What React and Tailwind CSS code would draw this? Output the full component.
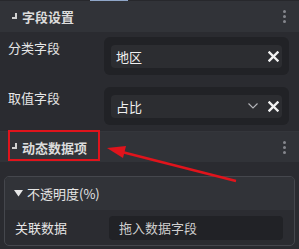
import React from "react";

const font = { fontFamily: '"Noto Sans CJK SC", "Noto Sans", sans-serif' };

function Kebab() {
  return (
    <div className="flex flex-col gap-[2px] items-center">
      <span className="w-[3px] h-[3px] rounded-full bg-[#85878d]" />
      <span className="w-[3px] h-[3px] rounded-full bg-[#85878d]" />
      <span className="w-[3px] h-[3px] rounded-full bg-[#85878d]" />
    </div>
  );
}

function XIcon() {
  return (
    <svg width="11" height="11" viewBox="0 0 11 11">
      <path d="M1.5 1.5 L9.5 9.5 M9.5 1.5 L1.5 9.5" stroke="#f2f2f2" strokeWidth="2.4" strokeLinecap="square" />
    </svg>
  );
}

function Chevron() {
  return (
    <svg width="10" height="6" viewBox="0 0 10 6">
      <path d="M0.5 0.5 L5 5 L9.5 0.5" stroke="#b5b6ba" strokeWidth="1.1" fill="none" />
    </svg>
  );
}

function Corner() {
  return <span className="inline-block w-[5px] h-[6px] border-r-2 border-b-2 border-[#d0d0d0] mr-[5px] mb-[2px]" />;
}

function SectionHeader({ title, h }) {
  return (
    <div className={`${h} bg-[#313338] flex items-center pl-[12px] pr-[13px]`}>
      <Corner />
      <span className="text-[13px] font-bold text-[#dcdcdc] leading-none">{title}</span>
      <div className="ml-auto">
        <Kebab />
      </div>
    </div>
  );
}

function Field({ label, value, select }) {
  return (
    <div className="flex items-start">
      <div className="w-[104px] pl-[8px] pt-[2px] text-[13px] leading-[18px] text-[#e6e6e6]">{label}</div>
      <div className="w-[185px] h-[38px] rounded-[6px] bg-[#212226] px-[7px] flex items-center">
        <div className="w-full h-[23px] rounded-[4px] bg-[#2c2d31] flex items-center pl-[5px] pr-[3px]">
          <span className="text-[13px] text-[#f0f0f0] leading-none">{value}</span>
          <div className="ml-auto flex items-center gap-[10px]">
            {select && <Chevron />}
            <XIcon />
          </div>
        </div>
      </div>
    </div>
  );
}

export default function App() {
  return (
    <div className="relative w-[299px] h-[249px] overflow-hidden bg-[#2a2b30]" style={font}>
      <div className="h-[1px] bg-[#27282c] relative">
        <div className="absolute left-[90px] top-0 w-[38px] h-[1px] bg-[#8fa6c8]" />
      </div>
      <SectionHeader title="字段设置" h="h-[31px]" />
      <div className="flex flex-col gap-[12px] pt-[5px] pb-[6px]">
        <Field label="分类字段" value="地区" />
        <Field label="取值字段" value="占比" select />
      </div>
      <div className="h-[1px] bg-[#34363b]" />
      <SectionHeader title="动态数据项" h="h-[30px]" />
      <div className="px-[4px] pt-[14px]">
        <div className="rounded-[5px] border border-[#45474d] bg-[#2b2c31] overflow-hidden">
          <div className="h-[33px] bg-[#313338] flex items-center pl-[9px]">
            <svg width="9" height="7" viewBox="0 0 9 7" className="mr-[4px]">
              <path d="M0 0 H9 L4.5 6.5 Z" fill="#e8e8e8" />
            </svg>
            <span className="text-[13px] text-[#e6e6e6] leading-none">不透明度(%)</span>
          </div>
          <div className="h-[35px] flex items-center pl-[10px] pr-[11px]">
            <span className="w-[94px] text-[13px] text-[#e6e6e6] leading-none">关联数据</span>
            <div className="flex-1 h-[24px] rounded-[4px] bg-[#212226] flex items-center pl-[10px]">
              <span className="text-[13px] text-[#cfcfcf] leading-none">拖入数据字段</span>
            </div>
          </div>
        </div>
      </div>

      <div className="absolute left-[8px] top-[130px] w-[92px] h-[31px] border-2 border-[#e0141c] pointer-events-none" />
      <svg className="absolute left-0 top-0 pointer-events-none" width="299" height="249" viewBox="0 0 299 249">
        <line x1="236" y1="181" x2="122" y2="152" stroke="#e0141c" strokeWidth="2.5" />
        <path d="M107 148 L126 146 L123 158 Z" fill="#e0141c" />
      </svg>
    </div>
  );
}
